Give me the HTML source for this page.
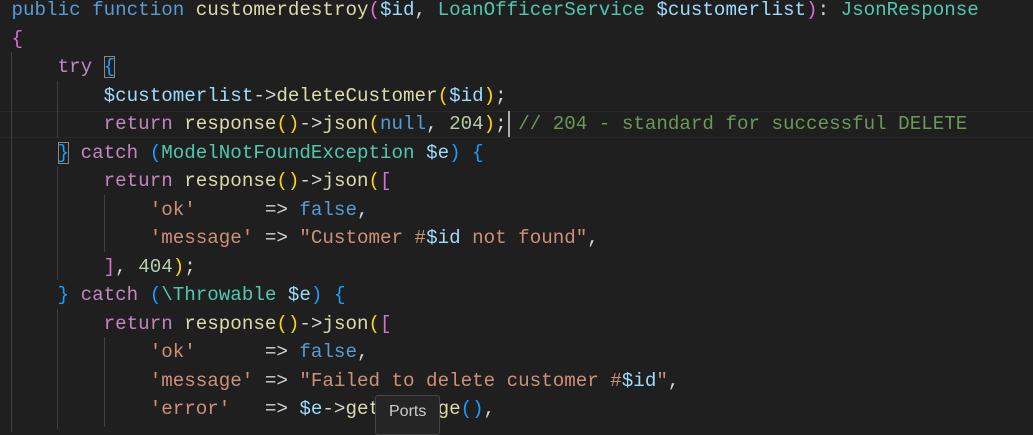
<!DOCTYPE html>
<html><head><style>
html,body{margin:0;padding:0;background:#1f1f1f;width:1033px;height:427px;overflow:hidden}
.ed{position:absolute;left:0;top:-4px;font-family:"Liberation Mono",monospace;font-size:19.2px;line-height:28.5px;color:#d4d4d4}
.l{height:28.5px;position:relative;white-space:pre}
.k{color:#569cd6}.f{color:#dcdcaa}.v{color:#9cdcfe}.c{color:#4ec9b0}.p{color:#c586c0}.s{color:#ce9178}.n{color:#b5cea8}.m{color:#6a9955}
.g{color:#ffd700}.o{color:#da70d6}.b{color:#179fff}
.ig{position:absolute;width:1px;background:#404040}
.box{outline:1px solid #888;outline-offset:-1px}
.cur{position:absolute;top:111px;left:0;width:1033px;height:27px;border-top:1px solid #282828;border-bottom:1px solid #282828;box-sizing:border-box}
.tip{position:absolute;left:375px;top:395px;width:65px;height:40px;background:#252526;border:1px solid #454545;border-radius:3px;box-sizing:border-box;color:#cccccc;font-family:"Liberation Sans",sans-serif;font-size:16px;padding:7px 0 0 13px;z-index:5}
</style></head><body>
<div class="cur"></div>
<div class="ig" style="left:11px;top:52px;height:380px"></div>
<div class="ig" style="left:57px;top:81px;height:57px"></div>
<div class="ig" style="left:57px;top:166px;height:114px"></div>
<div class="ig" style="left:104px;top:195px;height:57px"></div>
<div class="ig" style="left:57px;top:309px;height:120px"></div>
<div class="ig" style="left:104px;top:337px;height:90px"></div>
<div style="position:absolute;left:508px;top:111px;width:2px;height:26px;background:#aeafad;z-index:3"></div>
<div class="ed"><div class="l"> <span class="k">public</span> <span class="k">function</span> <span class="f">customerdestroy</span><span class="o">(</span><span class="v">$id</span>, <span class="c">LoanOfficerService</span> <span class="v">$customerlist</span><span class="o">)</span>: <span class="c">JsonResponse</span></div><div class="l"> <span class="o">{</span></div><div class="l">     <span class="p">try</span> <span class="b box">{</span></div><div class="l">         <span class="v">$customerlist</span>-&gt;<span class="f">deleteCustomer</span><span class="g">(</span><span class="v">$id</span><span class="g">)</span>;</div><div class="l">         <span class="p">return</span> <span class="f">response</span><span class="g">()</span>-&gt;<span class="f">json</span><span class="g">(</span><span class="k">null</span>, <span class="n">204</span><span class="g">)</span>; <span class="m">// 204 - standard for successful DELETE</span></div><div class="l">     <span class="b box">}</span> <span class="p">catch</span> <span class="b">(</span><span class="c">ModelNotFoundException</span> <span class="v">$e</span><span class="b">)</span> <span class="b">{</span></div><div class="l">         <span class="p">return</span> <span class="f">response</span><span class="g">()</span>-&gt;<span class="f">json</span><span class="g">(</span><span class="o">[</span></div><div class="l">             <span class="s">'ok'</span>      =&gt; <span class="k">false</span>,</div><div class="l">             <span class="s">'message'</span> =&gt; <span class="s">"Customer #</span><span class="v">$id</span><span class="s"> not found"</span>,</div><div class="l">         <span class="o">]</span>, <span class="n">404</span><span class="g">)</span>;</div><div class="l">     <span class="b">}</span> <span class="p">catch</span> <span class="b">(</span><span class="c">\Throwable</span> <span class="v">$e</span><span class="b">)</span> <span class="b">{</span></div><div class="l">         <span class="p">return</span> <span class="f">response</span><span class="g">()</span>-&gt;<span class="f">json</span><span class="g">(</span><span class="o">[</span></div><div class="l">             <span class="s">'ok'</span>      =&gt; <span class="k">false</span>,</div><div class="l">             <span class="s">'message'</span> =&gt; <span class="s">"Failed to delete customer #</span><span class="v">$id</span><span class="s">"</span>,</div><div class="l">             <span class="s">'error'</span>   =&gt; <span class="v">$e</span>-&gt;<span class="f">getMessage</span><span class="b">()</span>,</div></div>
<div class="tip">Ports</div>
</body></html>
